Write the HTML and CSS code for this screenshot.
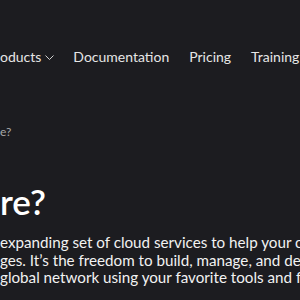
FILE: index.html
```html
<!DOCTYPE html>
<html lang="en">
<head>
  <meta charset="UTF-8" />
  <meta name="viewport" content="width=device-width, initial-scale=1.0"/>
  <title>What is Azure?</title>
  <link rel="stylesheet" href="styles.css">
</head>
<body>

  <!-- Top navigation (page is scrolled sideways, first item cut off) -->
  <header class="topbar">
    <nav class="nav">
      <a class="nav-item" href="#">oducts
        <svg class="chevron" width="9" height="5" viewBox="0 0 9 5">
          <path d="M0.5 0.5 L4.5 4.5 L8.5 0.5" fill="none" stroke="currentColor" stroke-width="1"/>
        </svg>
      </a>
      <a class="nav-item" href="#">Documentation</a>
      <a class="nav-item" href="#">Pricing</a>
      <a class="nav-item" href="#">Training</a>
    </nav>
  </header>

  <main class="content">
    <div class="breadcrumb">e?</div>

    <h1 class="title">re?</h1>

    <p class="intro">
      <span class="line">expanding set of cloud services to help your o</span>
      <span class="line">ges. It’s the freedom to build, manage, and de</span>
      <span class="line">global network using your favorite tools and f</span>
    </p>
  </main>

</body>
</html>
```

FILE: styles.css
```css
* { box-sizing: border-box; }

body {
  margin: 0;
  padding: 0;
  font-family: Lato, "Open Sans", sans-serif;
  background: #1c1c20;
  color: #f2f2f2;
  height: 100vh;
  overflow: hidden;
}

.topbar {
  padding-top: 47px;
}

.nav {
  display: flex;
  align-items: center;
  gap: 20px;
  white-space: nowrap;
}

.nav-item {
  display: flex;
  align-items: center;
  gap: 4px;
  font-size: 14px;
  line-height: 20px;
  color: #e6e6e6;
  text-decoration: none;
}

.nav-item:first-child {
  margin-right: -1px;
}

.chevron {
  color: #cfcfcf;
  margin-top: 1px;
}

.content {
  padding-top: 57px;
}

.breadcrumb {
  font-size: 12px;
  line-height: 16px;
  color: #a8a8a8;
}

.title {
  margin: 40px 0 0;
  font-size: 35px;
  line-height: 42px;
  font-weight: 600;
  color: #ffffff;
}

.intro {
  margin: 12px 0 0;
  font-size: 15.2px;
  line-height: 17.5px;
  color: #f2f2f2;
}

.line {
  display: block;
  white-space: nowrap;
}
```
